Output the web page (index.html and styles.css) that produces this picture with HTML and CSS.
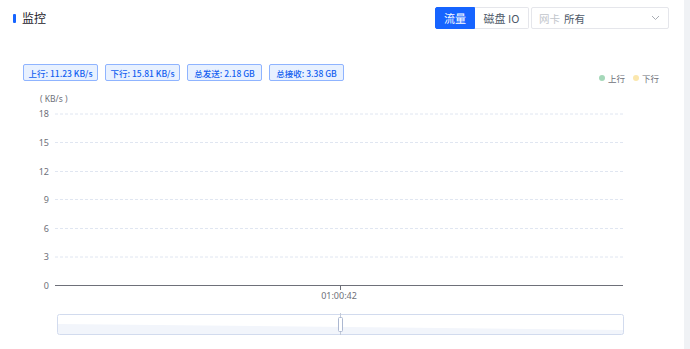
FILE: index.html
```html
<!DOCTYPE html>
<html lang="zh-CN">
<head>
    <meta charset="UTF-8">
    <meta name="viewport" content="width=device-width, initial-scale=1.0">
    <title>监控</title>
    <link rel="stylesheet" href="styles.css">
</head>
<body>

    <div class="card">
        <div class="card-head">
            <div class="title">监控</div>
            <div class="tools">
                <div class="tabs">
                    <button class="tab active">流量</button>
                    <button class="tab">磁盘 IO</button>
                </div>
                <div class="select">
                    <span class="select-label">网卡</span>
                    <span class="select-value">所有</span>
                    <svg class="chevron" width="9" height="6" viewBox="0 0 9 6">
                        <path d="M1 1 L4.5 4.5 L8 1" fill="none" stroke="#a9adb4" stroke-width="1"/>
                    </svg>
                </div>
            </div>
        </div>

        <div class="stats">
            <div class="tags">
                <span class="tag">上行: 11.23 KB/s</span>
                <span class="tag">下行: 15.81 KB/s</span>
                <span class="tag">总发送: 2.18 GB</span>
                <span class="tag">总接收: 3.38 GB</span>
            </div>
            <div class="legend">
                <span class="legend-item"><i class="dot up"></i>上行</span>
                <span class="legend-item"><i class="dot down"></i>下行</span>
            </div>
        </div>

        <!-- 流量图表 -->
        <svg class="chart" width="684" height="259" viewBox="0 0 684 259">
            <text class="unit" x="40" y="12">( KB/s )</text>

            <g class="grid">
                <line x1="55" y1="24" x2="623" y2="24"/>
                <line x1="55" y1="52.5" x2="623" y2="52.5"/>
                <line x1="55" y1="81.5" x2="623" y2="81.5"/>
                <line x1="55" y1="109.5" x2="623" y2="109.5"/>
                <line x1="55" y1="138.5" x2="623" y2="138.5"/>
                <line x1="55" y1="167" x2="623" y2="167"/>
            </g>

            <g class="ylabels">
                <text x="49" y="27">18</text>
                <text x="49" y="55.5">15</text>
                <text x="49" y="84.5">12</text>
                <text x="49" y="112.5">9</text>
                <text x="49" y="141.5">6</text>
                <text x="49" y="170">3</text>
                <text x="49" y="199">0</text>
            </g>

            <line class="axis" x1="55" y1="195.5" x2="623" y2="195.5"/>
            <line class="axis" x1="340.5" y1="195.5" x2="340.5" y2="200"/>
            <text class="xlabel" x="339" y="208.5">01:00:42</text>

            <!-- 缩放条 -->
            <polygon class="shadow" points="58,234 624,240 624,244 58,244"/>
            <rect class="zoom" x="57.5" y="224.5" width="566" height="20" rx="2"/>
            <line class="handle-line" x1="340.5" y1="223" x2="340.5" y2="245"/>
            <rect class="handle" x="338.5" y="227.5" width="4" height="14" rx="1"/>
        </svg>
    </div>

</body>
</html>
```

FILE: styles.css
```css
body {
    margin: 0;
    background: #f0f2f5;
    font-family: "Noto Sans CJK SC", "Noto Sans", sans-serif;
    color: #1d2129;
    overflow: hidden;
}
.card {
    background: #fff;
    width: 684px;
    height: 360px;
}
.card-head {
    display: flex;
    justify-content: space-between;
    align-items: center;
    padding: 7px 15px 0 13px;
    height: 22px;
}
.title {
    display: flex;
    align-items: center;
    font-size: 12px;
    line-height: 14px;
    color: #1d2129;
}
.title::before {
    content: "";
    width: 3px;
    height: 9px;
    border-radius: 1px;
    background: #1664ff;
    margin-right: 6px;
}
.tools {
    display: flex;
    gap: 2px;
}
.tabs {
    display: flex;
}
.tab {
    font-family: inherit;
    font-size: 11px;
    height: 22px;
    padding: 0;
    border: 1px solid #e5e6eb;
    background: #fff;
    color: #4e5969;
    cursor: pointer;
}
.tab:first-child {
    width: 40px;
    border-radius: 2px 0 0 2px;
}
.tab:last-child {
    width: 54px;
    border-left: none;
    border-radius: 0 2px 2px 0;
}
.tab.active {
    background: #1664ff;
    border-color: #1664ff;
    color: #fff;
}
.select {
    display: flex;
    align-items: center;
    width: 138px;
    height: 22px;
    box-sizing: border-box;
    border: 1px solid #e5e6eb;
    border-radius: 2px;
    padding: 0 8px 0 7px;
    font-size: 10.5px;
}
.select-label {
    color: #c2c6cc;
    margin-right: 4px;
}
.select-value {
    color: #4e5969;
    flex: 1;
}
.stats {
    display: flex;
    justify-content: space-between;
    align-items: flex-start;
    height: 17px;
    margin-top: 35px;
    padding: 0 25px 0 23px;
}
.tags {
    display: flex;
    gap: 7px;
}
.tag {
    display: flex;
    align-items: center;
    justify-content: center;
    width: 75px;
    height: 17px;
    box-sizing: border-box;
    border: 1px solid #8fb4ff;
    border-radius: 2px;
    background: #e8f1ff;
    color: #1260f0;
    font-size: 8.5px;
    font-weight: 500;
    white-space: nowrap;
}
.legend {
    display: flex;
    gap: 8px;
    margin-top: 8px;
    font-size: 8.5px;
    line-height: 12px;
    color: #6e7079;
}
.legend-item {
    display: flex;
    align-items: center;
}
.dot {
    display: inline-block;
    width: 6px;
    height: 6px;
    border-radius: 50%;
    margin-right: 3px;
}
.dot.up { background: #a5d8b9; }
.dot.down { background: #fbe7ad; }
.chart {
    display: block;
    margin-top: 9px;
    font-family: "Noto Sans", sans-serif;
}
.unit {
    font-size: 8.5px;
    fill: #6e7079;
}
.grid line {
    stroke: #e0e6f1;
    stroke-dasharray: 3 2;
    stroke-width: 1;
}
.ylabels text {
    font-size: 9px;
    fill: #6e7079;
    text-anchor: end;
}
.axis {
    stroke: #6e7079;
    stroke-width: 1;
}
.xlabel {
    font-size: 9px;
    fill: #6e7079;
    text-anchor: middle;
}
.shadow {
    fill: #f2f5fb;
}
.zoom {
    fill: none;
    stroke: #d2dbee;
}
.handle-line {
    stroke: #c3cad8;
}
.handle {
    fill: #fff;
    stroke: #acb8d1;
}
```
